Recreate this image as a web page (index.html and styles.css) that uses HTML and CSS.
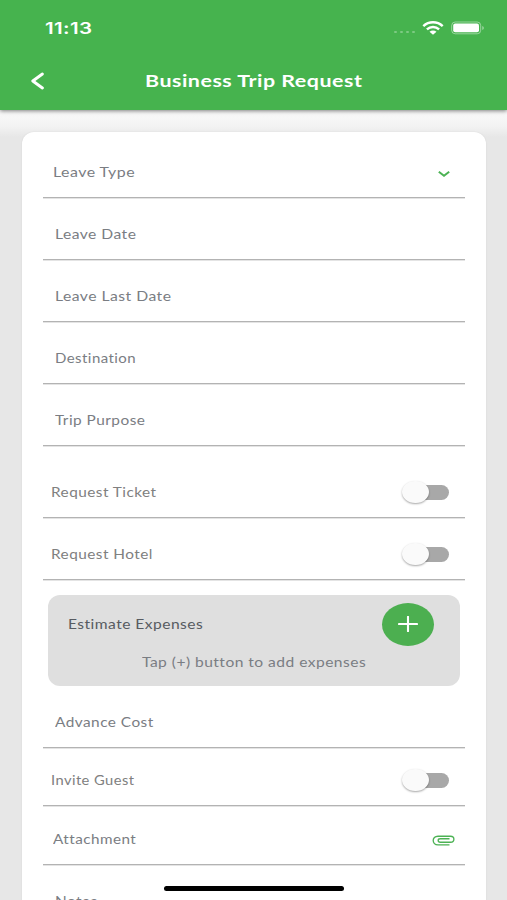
FILE: index.html
```html
<!DOCTYPE html>
<html lang="en">
<head>
<meta charset="utf-8">
<title>Business Trip Request</title>
<link rel="stylesheet" href="styles.css">
</head>
<body>
<div class="screen">
  <header class="header">
    <div class="status">
      <span class="time">11:13</span>
      <div class="indicators">
        <span class="cell"><i></i><i></i><i></i><i></i></span>
        <svg class="wifi" width="22" height="14" viewBox="0 0 22 14"><g fill="none" stroke="#fff" stroke-width="2.5"><path d="M1.3 5.1C6.9 .1 15.1 .1 20.7 5.1"/><path d="M4.9 8.4C8.5 5.2 13.5 5.2 17.1 8.4"/></g><path d="M7.5 10.8C9.6 9 12.4 9 14.5 10.8L11 13.7Z" fill="#fff"/></svg>
        <svg class="battery" width="34" height="14" viewBox="0 0 34 14"><rect x=".7" y="1" width="29" height="11.8" rx="3.5" fill="none" stroke="#fff" stroke-opacity=".45"/><rect x="2.2" y="2.6" width="25.8" height="8.6" rx="2" fill="#fff"/><path d="M31.3 5v4c2-.8 2-3.2 0-4Z" fill="#fff" fill-opacity=".5"/></svg>
      </div>
    </div>
    <div class="titlebar">
      <svg class="back" width="14" height="18" viewBox="0 0 14 18"><path d="M12.4 2 2.8 9l9.6 7" fill="none" stroke="#fff" stroke-width="2.9" stroke-linecap="round" stroke-linejoin="round"/></svg>
      <h1>Business Trip Request</h1>
    </div>
  </header>
  <main class="card">
    <div class="row first"><span class="label type">Leave Type</span>
      <svg class="chevron" width="12" height="8" viewBox="0 0 12 8"><path d="M.8 1.8 6 5.7l5.2-3.9" fill="none" stroke="#4cb254" stroke-width="2"/></svg></div>
    <div class="row"><span class="label field date">Leave Date</span></div>
    <div class="row"><span class="label field last">Leave Last Date</span></div>
    <div class="row"><span class="label field destination">Destination</span></div>
    <div class="row"><span class="label field purpose">Trip Purpose</span></div>
    <div class="row spaced"><span class="label option ticket">Request Ticket</span><span class="switch"></span></div>
    <div class="row"><span class="label option hotel">Request Hotel</span><span class="switch"></span></div>
    <section class="expenses">
      <div class="expenses-head">
        <span class="label estimate">Estimate Expenses</span>
        <span class="add"><svg width="20" height="16" viewBox="0 0 20 16"><path d="M1 8h18M10 .8v14.4" fill="none" stroke="#fff" stroke-width="2.1" stroke-linecap="round"/></svg></span>
      </div>
      <p class="hint"><span class="label tap">Tap (+) button to add expenses</span></p>
    </section>
    <div class="row"><span class="label field advance">Advance Cost</span></div>
    <div class="row short"><span class="label option guest">Invite Guest</span><span class="switch"></span></div>
    <div class="row mid"><span class="label attachment">Attachment</span>
      <svg class="clip" width="23" height="11" viewBox="0 0 23 11"><path d="M17.5 9.8H6C-.4 9.8-.4 1.2 6 1.2h12.5c4.5 0 4.5 6 0 6H8.2c-2.7 0-2.7-3.5 0-3.5h9.3" fill="none" stroke="#4cb254" stroke-width="1.35"/></svg></div>
    <div class="row"><span class="label field notes">Notes</span></div>
  </main>
  <div class="home"></div>
</div>
</body>
</html>
```
FILE: styles.css
```css
* { box-sizing: border-box; }

body { margin: 0; font-family: Lato, "Liberation Sans", sans-serif; }

.screen {
  position: relative;
  height: 900px;
  overflow: hidden;
  background: linear-gradient(#f9f9f9 112px, #f3f3f3 126px, #e7e7e7 137px);
}

.header {
  position: relative;
  height: 110px;
  background: #46b34e;
  color: #fff;
  box-shadow: 0 1px 4px rgba(0, 0, 0, .5);
}

.status {
  display: flex;
  justify-content: space-between;
  align-items: center;
  height: 55px;
  padding: 0 22px 0 45px;
}

.time {
  font: 600 16px/20px Inter, sans-serif;
  letter-spacing: .3px;
  transform: scaleX(1.28);
  transform-origin: left;
}

.indicators { display: flex; align-items: center; }
.cell { display: flex; gap: 3px; margin: 9px 7px 0 0; }
.cell i { width: 3px; height: 2px; border-radius: 1px; background: rgba(255, 255, 255, .3); }
.wifi { margin-right: 7px; }

.titlebar {
  display: grid;
  grid-template-columns: 145px 1fr;
  align-items: center;
  height: 52px;
}

.back { margin-left: 30px; }

h1 {
  width: max-content;
  margin: 0;
  font: 700 17px/24px Lato, sans-serif;
  letter-spacing: .4px;
  transform: scaleX(1.26);
  transform-origin: left;
}

.card {
  height: 800px;
  margin: 22px 21px 0 22px;
  padding: 0 21px 0 20.5px;
  border-radius: 12px 12px 0 0;
  background: #fff;
  box-shadow: 0 0 2px rgba(0, 0, 0, .08);
}

.row {
  display: flex;
  justify-content: space-between;
  align-items: flex-end;
  height: 62px;
  padding: 0 10px;
  border-bottom: 1px solid #b3b3b3;
  box-shadow: 0 1px 0 #e4e4e4;
}

.row.first { height: 66px; }
.row.spaced { height: 72px; }
.row.short { height: 58px; }
.row.mid { height: 59px; }

.label {
  width: max-content;
  white-space: nowrap;
  font-size: 13.5px;
  line-height: 49px;
  letter-spacing: .4px;
  color: #7a7d83;
  transform: scaleX(1.18);
  transform-origin: left;
}

.field { margin-left: 2.4px; }
.option { margin-left: -2px; color: #808080; }

.date { transform: scaleX(1.16); }
.last { transform: scaleX(1.165); }
.destination { transform: scaleX(1.11); }
.purpose { transform: scaleX(1.142); }
.ticket, .hotel { transform: scaleX(1.138); }
.estimate, .tap { transform: scaleX(1.155); }
.advance, .notes { transform: scaleX(1.14); }
.guest { transform: scaleX(1.09); }
.attachment { transform: scaleX(1.13); }

.chevron { margin: 0 5.5px 19.5px 0; }
.clip { margin-bottom: 18.5px; }

.switch {
  position: relative;
  width: 48px;
  height: 15px;
  margin: 0 6.5px 17.5px 0;
  border-radius: 7.5px;
  background: linear-gradient(90deg, transparent 14px, #a8a8a8 14px);
}

.switch::before {
  content: "";
  position: absolute;
  left: 1px;
  top: -4px;
  width: 27px;
  height: 22.5px;
  border-radius: 50%;
  background: #fafafa;
  box-shadow: 0 1px 2px rgba(0, 0, 0, .35);
}

.expenses {
  height: 91px;
  margin: 15px 5px 0;
  border-radius: 12px;
  background: #dfdfdf;
}

.expenses-head {
  display: flex;
  justify-content: space-between;
  align-items: center;
  height: 58px;
  padding: 0 26px 0 20.5px;
}

.add {
  display: flex;
  justify-content: center;
  align-items: center;
  width: 52px;
  height: 43px;
  border-radius: 50%;
  background: #4caf50;
}

.hint { height: 20px; margin: 0 0 0 94px; }
.hint .label { display: block; line-height: 19px; }
.estimate { color: #575b61; line-height: 51px; }

.home {
  position: absolute;
  left: 164px;
  bottom: 9px;
  width: 180px;
  height: 5px;
  border-radius: 3px;
  background: #000;
}
```
